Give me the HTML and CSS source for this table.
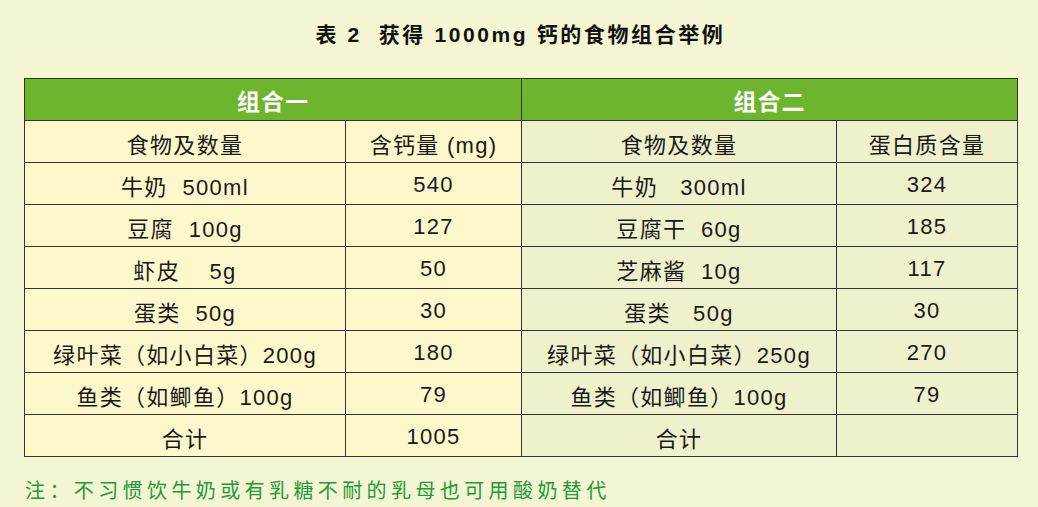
FILE: index.html
```html
<!DOCTYPE html>
<html lang="zh">
<head>
<meta charset="utf-8">
<title>表 2 获得 1000mg 钙的食物组合举例</title>
<link rel="stylesheet" href="styles.css">
</head>
<body>
<div class="page">
  <h1 class="title">表 2&nbsp;&nbsp;获得 1000mg 钙的食物组合举例</h1>
  <table class="food">
    <colgroup>
      <col class="c1"><col class="c2"><col class="c3"><col class="c4">
    </colgroup>
    <tr class="group">
      <th colspan="2">组合一</th>
      <th colspan="2">组合二</th>
    </tr>
    <tr>
      <td class="a">食物及数量</td><td class="a">含钙量 (mg)</td>
      <td class="b">食物及数量</td><td class="b">蛋白质含量</td>
    </tr>
    <tr>
      <td class="a">牛奶&nbsp;&nbsp;500ml</td><td class="a">540</td>
      <td class="b">牛奶&nbsp;&nbsp;&nbsp;300ml</td><td class="b">324</td>
    </tr>
    <tr>
      <td class="a">豆腐&nbsp;&nbsp;100g</td><td class="a">127</td>
      <td class="b">豆腐干&nbsp;&nbsp;60g</td><td class="b">185</td>
    </tr>
    <tr>
      <td class="a">虾皮&nbsp;&nbsp;&nbsp;&nbsp;5g</td><td class="a">50</td>
      <td class="b">芝麻酱&nbsp;&nbsp;10g</td><td class="b">117</td>
    </tr>
    <tr>
      <td class="a">蛋类&nbsp;&nbsp;50g</td><td class="a">30</td>
      <td class="b">蛋类&nbsp;&nbsp;&nbsp;50g</td><td class="b">30</td>
    </tr>
    <tr>
      <td class="a">绿叶菜（如小白菜）200g</td><td class="a">180</td>
      <td class="b">绿叶菜（如小白菜）250g</td><td class="b">270</td>
    </tr>
    <tr>
      <td class="a">鱼类（如鲫鱼）100g</td><td class="a">79</td>
      <td class="b">鱼类（如鲫鱼）100g</td><td class="b">79</td>
    </tr>
    <tr>
      <td class="a">合计</td><td class="a">1005</td>
      <td class="b">合计</td><td class="b"></td>
    </tr>
  </table>
  <p class="note">注：不习惯饮牛奶或有乳糖不耐的乳母也可用酸奶替代</p>
</div>
</body>
</html>
```
FILE: styles.css
```css
html, body {
  margin: 0;
  padding: 0;
}
body {
  background: #f4f5d3;
  font-family: "Liberation Sans", "Noto Sans CJK SC", sans-serif;
  color: #1a1a1a;
}
.page {
  padding: 0 21px 0 24px;
}
.title {
  margin: 0;
  padding-top: 23px;
  box-sizing: border-box;
  height: 78px;
  line-height: 24px;
  font-size: 21px;
  font-weight: bold;
  letter-spacing: 2.6px;
  text-align: center;
  color: #111;
}
.food {
  border-collapse: collapse;
  table-layout: fixed;
  width: 993px;
}
.c1 { width: 321px; }
.c2 { width: 176px; }
.c3 { width: 315px; }
.c4 { width: 181px; }
.food tr {
  height: 42px;
}
.food th, .food td {
  border: 1px solid #333;
  padding: 0;
  text-align: center;
  vertical-align: middle;
  white-space: nowrap;
}
.group th {
  background: #6db52d;
  color: #fff;
  font-size: 23px;
  font-weight: bold;
  letter-spacing: 1px;
}
.food td {
  font-size: 22px;
  letter-spacing: 1.3px;
  padding-top: 2px;
}
.food td.a {
  background: #fdf8cc;
}
.food td.b {
  background: #eef1cb;
}
.note {
  margin: 22px 0 0 1px;
  font-size: 20px;
  line-height: 24px;
  letter-spacing: 4.4px;
  color: #229a3a;
}
```
